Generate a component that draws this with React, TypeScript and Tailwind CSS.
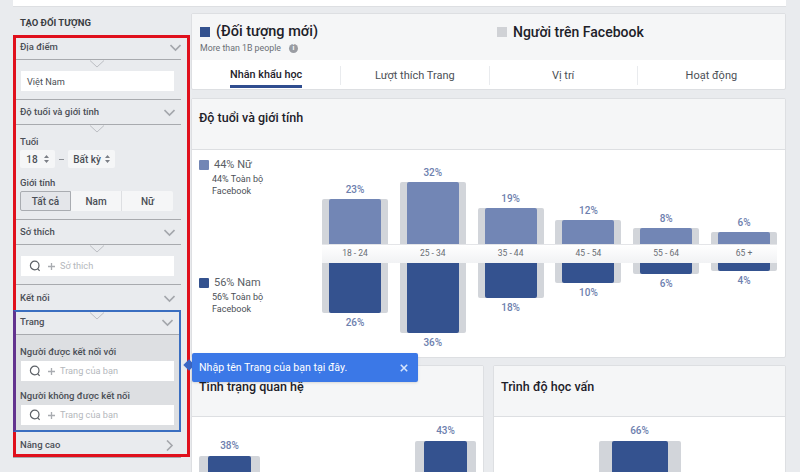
import { ReactNode } from "react";

const ageBars = [
  { label: "18 - 24", top: 45, bottom: 50, topPct: "23%", bottomPct: "26%" },
  { label: "25 - 34", top: 62, bottom: 70, topPct: "32%", bottomPct: "36%" },
  { label: "35 - 44", top: 36, bottom: 35, topPct: "19%", bottomPct: "18%" },
  { label: "45 - 54", top: 24, bottom: 20, topPct: "12%", bottomPct: "10%" },
  { label: "55 - 64", top: 16, bottom: 11, topPct: "8%", bottomPct: "6%" },
  { label: "65 +", top: 12, bottom: 8, topPct: "6%", bottomPct: "4%" },
];

function Chevron({ right = false }: { right?: boolean }) {
  return (
    <svg width="11" height="11" viewBox="0 0 11 11" fill="none" stroke="#a4a7ac" strokeWidth="1.6">
      {right ? <path d="M3 .5 8 5.5 3 10.5" /> : <path d="M.5 3 5.5 8 10.5 3" />}
    </svg>
  );
}

function Notch() {
  return (
    <svg className="absolute left-0 top-0" width="165" height="8" viewBox="0 0 165 8" fill="none">
      <path d="M74 .5 81 7 88 .5" stroke="#bcbec3" strokeWidth="1" />
    </svg>
  );
}

function SectionHead({ title, height, right }: { title: string; height: string; right?: boolean }) {
  return (
    <div className={`flex items-center justify-between pl-1 pr-[6px] text-[9.5px] font-medium text-[#4b4f56] ${height}`}>
      <span>{title}</span>
      <Chevron right={right} />
    </div>
  );
}

function SearchInput({ placeholder }: { placeholder: string }) {
  return (
    <div className="flex h-5 w-[153px] items-center bg-white pl-2 text-[9.2px] text-[#b4b7bc]">
      <svg width="12" height="12" viewBox="0 0 12 12" fill="none" stroke="#5d6167" strokeWidth="1.2">
        <circle cx="5.7" cy="5.5" r="4.3" />
        <path d="M8.6 8.6 10.6 10.8" />
      </svg>
      <svg className="ml-[6px]" width="9" height="9" viewBox="0 0 9 9" stroke="#a9acb1" strokeWidth="1.3">
        <path d="M4.5 1V8M1 4.5H8" />
      </svg>
      <span className="ml-1">{placeholder}</span>
    </div>
  );
}

function Updown() {
  return (
    <svg width="5" height="8" viewBox="0 0 5 8" fill="#7b7f86">
      <path d="M2.5 0 5 3H0ZM2.5 8 0 5H5Z" />
    </svg>
  );
}

function Card({ children, className = "" }: { children: ReactNode; className?: string }) {
  return (
    <div className={`overflow-hidden rounded-[2px] border border-[#dddfe2] bg-white ${className}`}>{children}</div>
  );
}

function Legend({ color, title, sub, className = "" }: { color: string; title: string; sub: string; className?: string }) {
  return (
    <div className={className}>
      <div className="flex h-[10px] items-center">
        <div className={`h-[10px] w-[10px] rounded-[1px] ${color}`} />
        <span className="ml-[5px] text-[11px] text-[#5a5e65]">{title}</span>
      </div>
      <p className="ml-[13px] mt-[3px] text-[9px] leading-[12px] text-[#4b4f56]">
        {sub}
        <br />
        Facebook
      </p>
    </div>
  );
}

function AgeChart() {
  return (
    <div className="w-[455px]">
      <div className="flex h-[94px] items-end justify-between">
        {ageBars.map((b) => (
          <div key={b.label} className="w-[66px]">
            <p className="mb-[3px] text-center text-[10px] font-medium leading-[12px] text-[#6d80ae]">{b.topPct}</p>
            <div className="rounded-t-[2px] bg-[#d2d5da] px-[7px] pt-0">
              <div className="rounded-t-[2px] bg-[#7286b5]" style={{ height: b.top }} />
            </div>
          </div>
        ))}
      </div>
      <div className="flex h-[19px] justify-between border-t border-[#e4e5e8] bg-gradient-to-b from-white to-[#f1f2f4]">
        {ageBars.map((b) => (
          <span key={b.label} className="w-[66px] text-center text-[8.5px] leading-[17px] text-[#6a6e75]">
            {b.label}
          </span>
        ))}
      </div>
      <div className="flex items-start justify-between">
        {ageBars.map((b) => (
          <div key={b.label} className="w-[66px]">
            <div className="rounded-b-[2px] bg-[#d2d5da] px-[7px]">
              <div className="rounded-b-[2px] bg-[#34528f]" style={{ height: b.bottom }} />
            </div>
            <p className="mt-[4px] text-center text-[10px] font-medium leading-[12px] text-[#6d80ae]">{b.bottomPct}</p>
          </div>
        ))}
      </div>
    </div>
  );
}

function TallBar({ pct, className, track }: { pct: string; className: string; track: string }) {
  return (
    <div className={className}>
      <p className="mb-[4px] text-center text-[10px] font-medium leading-[12px] text-[#6d80ae]">{pct}</p>
      <div className={`h-[60px] rounded-t-[2px] bg-[#d2d5da] ${track}`}>
        <div className="h-[60px] rounded-t-[2px] bg-[#34528f]" />
      </div>
    </div>
  );
}

export default function App() {
  return (
    <div className="relative h-[472px] w-[800px] overflow-hidden bg-[#e9ebee] pl-[13px] [font-family:Roboto,sans-serif]">
      <div className="h-[7px] w-[773px] border-b border-[#dddfe2] bg-white" />
      <div className="flex">
        {/* sidebar */}
        <div className="w-[177px] shrink-0">
          <div className="flex h-[28px] items-center pl-[7px] pt-[4px] text-[9.5px] font-bold text-[#3a3d42]">
            TẠO ĐỐI TƯỢNG
          </div>
          <div className="h-[422px] border-[3px] border-[#e0101c]">
            <SectionHead title="Địa điểm" height="h-[21px] pb-[2px]" />
            <div className="relative w-[165px] border-t border-[#a8aaae] pb-2 pl-[5px] pt-[11px]">
              <Notch />
              <div className="flex h-5 w-[153px] items-center bg-white pl-[6px] pt-px text-[9.2px] text-[#4b4f56]">Việt Nam</div>
            </div>
            <div className="w-[165px] border-t border-[#a8aaae]">
              <SectionHead title="Độ tuổi và giới tính" height="h-6" />
            </div>
            <div className="relative w-[165px] border-t border-[#a8aaae] pl-1 pt-[11px]">
              <Notch />
              <p className="text-[9.5px] font-medium leading-3 text-[#4b4f56]">Tuổi</p>
              <div className="mt-[2px] flex items-center text-[10px] font-medium text-[#4b4f56]">
                <div className="flex h-[18px] w-[35px] items-center justify-center gap-[6px] rounded-[2px] bg-[#f5f6f7]">
                  18 <Updown />
                </div>
                <div className="mx-[4px] h-px w-[5px] bg-[#8d9096]" />
                <div className="flex h-[18px] w-[47px] items-center justify-center gap-[4px] rounded-[2px] bg-[#f5f6f7]">
                  Bất kỳ <Updown />
                </div>
              </div>
              <p className="mt-[9px] text-[9.5px] font-medium leading-3 text-[#4b4f56]">Giới tính</p>
              <div className="mt-[2px] flex h-5 w-[153px] text-[10px] font-medium text-[#4b4f56]">
                <div className="flex w-[51px] items-center justify-center rounded-l-[2px] border border-[#a9acb1] bg-[#e4e6ea]">Tất cả</div>
                <div className="flex w-[51px] items-center justify-center border-r border-[#dddfe2] bg-[#f5f6f7]">Nam</div>
                <div className="flex w-[51px] items-center justify-center rounded-r-[2px] bg-[#f5f6f7]">Nữ</div>
              </div>
              <div className="h-2" />
            </div>
            <div className="w-[165px] border-t border-[#a8aaae]">
              <SectionHead title="Sở thích" height="h-6" />
            </div>
            <div className="relative w-[165px] border-t border-[#a8aaae] pb-2 pl-[5px] pt-[11px]">
              <Notch />
              <SearchInput placeholder="Sở thích" />
            </div>
            <div className="w-[165px] border-t border-[#a8aaae]">
              <SectionHead title="Kết nối" height="h-[25px] pt-[2px]" />
            </div>
            <div className="relative -ml-[3px] w-[168px] border-2 border-l-[3px] border-[#3a6ec0] border-l-[#63338f]">
              <Notch />
              <SectionHead title="Trang" height="h-[22px] pb-[2px]" />
              <div className="border-t border-[#a8aaae] bg-[#dddfe2] pb-[5px] pl-1 pt-[11px]">
                <p className="text-[9.5px] font-medium leading-3 text-[#4b4f56]">Người được kết nối với</p>
                <div className="ml-px mt-[3px]">
                  <SearchInput placeholder="Trang của bạn" />
                </div>
                <p className="mt-[9px] text-[9.5px] font-medium leading-3 text-[#4b4f56]">Người không được kết nối</p>
                <div className="ml-px mt-[3px]">
                  <SearchInput placeholder="Trang của bạn" />
                </div>
              </div>
            </div>
            <div className="w-[165px]">
              <SectionHead title="Nâng cao" height="h-[24px] pt-[3px]" right />
            </div>
          </div>
          <div className="h-px w-[168px] bg-[#a8aaae]" />
        </div>

        {/* main */}
        <div className="ml-px w-[595px] shrink-0 pt-[6px]">
          <Card>
            <div className="flex h-[46px] bg-[#f5f6f7]">
              <div className="w-[305px] pl-2 pt-[8px]">
                <div className="flex items-center">
                  <div className="h-[10px] w-[10px] bg-[#34528f]" />
                  <span className="ml-[6px] text-[14.5px] font-medium leading-5 text-[#1d2129]">(Đối tượng mới)</span>
                </div>
                <div className="flex items-center text-[8.8px] text-[#6b6f76]">
                  More than 1B people
                  <div className="ml-[8px] flex h-[9px] w-[9px] items-center justify-center rounded-full bg-[#9a9da3] text-[7px] font-bold leading-none text-white">i</div>
                </div>
              </div>
              <div className="flex items-start pt-[8px]">
                <div className="flex items-center">
                  <div className="h-[10px] w-[10px] bg-[#d0d2d6]" />
                  <span className="ml-[6px] text-[14px] font-medium leading-5 text-[#1d2129]">Người trên Facebook</span>
                </div>
              </div>
            </div>
            <div className="grid h-[29px] grid-cols-4 text-[11px] text-[#4b4f56]">
              <div className="flex justify-center">
                <span className="flex h-[28px] items-center border-b-[3px] border-[#2f4d8f] pt-[5px] text-[10.8px] font-medium text-[#1d2129]">Nhân khẩu học</span>
              </div>
              <div className="my-[6px] flex items-center justify-center border-l border-[#e9ebee] pt-[2px]">Lượt thích Trang</div>
              <div className="my-[6px] flex items-center justify-center border-l border-[#e9ebee] pt-[2px]">Vị trí</div>
              <div className="my-[6px] flex items-center justify-center border-l border-[#e9ebee] pt-[2px]">Hoạt động</div>
            </div>
          </Card>

          <Card className="mt-2 h-[260px]">
            <div className="flex h-[51px] items-center border-b border-[#dddfe2] bg-[#f5f6f7] pl-[7px] text-[12.5px] font-medium text-[#1d2129]">
              <span className="-mt-[11px]">Độ tuổi và giới tính</span>
            </div>
            <div className="flex">
              <div className="w-[130px] shrink-0 pl-[7px] pt-[10px]">
                <Legend color="bg-[#7286b5]" title="44% Nữ" sub="44% Toàn bộ" />
                <Legend className="mt-[81px]" color="bg-[#34528f]" title="56% Nam" sub="56% Toàn bộ" />
              </div>
              <AgeChart />
            </div>
          </Card>

          <div className="mt-[7px] flex gap-[9px]">
            <Card className="h-[120px] w-[293px] shrink-0">
              <div className="flex h-[51px] items-center border-b border-[#dddfe2] bg-[#f5f6f7] pl-[7px] text-[12.5px] font-medium text-[#1d2129]">
                <span className="-mt-[8px]">Tình trạng quan hệ</span>
              </div>
              <div className="flex items-start justify-between px-[7px]">
                <TallBar pct="38%" className="mt-[23px] w-[61px]" track="px-[9px]" />
                <TallBar pct="43%" className="mt-[8px] w-[61px]" track="px-[9px]" />
              </div>
            </Card>
            <Card className="h-[120px] w-[293px] shrink-0">
              <div className="flex h-[51px] items-center border-b border-[#dddfe2] bg-[#f5f6f7] pl-[7px] text-[12.5px] font-medium text-[#1d2129]">
                <span className="-mt-[8px]">Trình độ học vấn</span>
              </div>
              <div className="flex justify-center">
                <TallBar pct="66%" className="mt-[8px] w-[82px]" track="px-[13px]" />
              </div>
            </Card>
          </div>
        </div>
      </div>

      {/* tooltip */}
      <div className="absolute left-[185px] top-[361px] h-[8px] w-[8px] rotate-45 bg-[#3b68c5]" />
      <div className="absolute left-[192px] top-[353px] flex h-[29px] w-[226px] items-center justify-between rounded-[2px] bg-[#3b78e7] pl-[7px] pr-[10px] text-[10.6px] text-white shadow-sm">
        <span>Nhập tên Trang của bạn tại đây.</span>
        <svg width="8" height="8" viewBox="0 0 8 8" stroke="#d6e4fb" strokeWidth="1.6">
          <path d="M.8.8 7.2 7.2M7.2.8.8 7.2" />
        </svg>
      </div>
    </div>
  );
}
